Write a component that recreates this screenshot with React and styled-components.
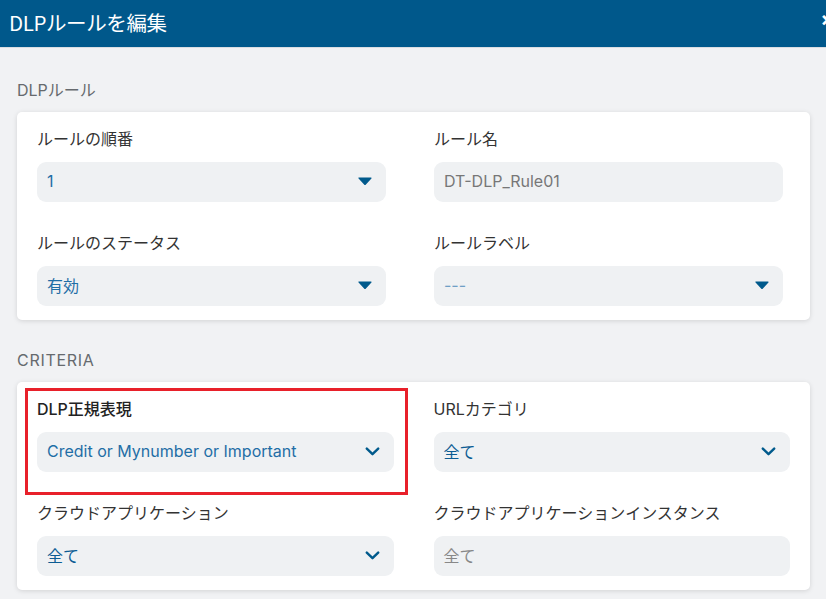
import React from "react";
import styled, { createGlobalStyle } from "styled-components";

const GlobalStyle = createGlobalStyle`
  html, body {
    margin: 0;
    padding: 0;
    background: #f1f2f4;
    overflow: hidden;
    font-family: "Inter", "Noto Sans CJK JP", sans-serif;
  }
`;

const Page = styled.div`
  width: 826px;
  height: 599px;
  background: #f1f2f4;
`;

const Header = styled.div`
  height: 48px;
  background: #00588b;
  border-bottom: 1px solid #d9dde2;
  display: flex;
  align-items: center;
  justify-content: space-between;
  padding-left: 9px;
  padding-bottom: 4px;
  box-sizing: border-box;
  overflow: hidden;
`;

const Title = styled.h1`
  margin: 0;
  font-family: "Noto Sans CJK JP", sans-serif;
  font-weight: 400;
  font-size: 20.5px;
  color: #fff;
  letter-spacing: -0.4px;
`;

const Close = styled.span`
  color: #fff;
  font-size: 20px;
  font-weight: 700;
  margin-right: -8px;
  margin-top: -6px;
`;

const Body = styled.div`
  padding: 31px 16px 0 17px;
`;

const SectionLabel = styled.div`
  font-size: 16px;
  line-height: 22px;
  color: #666a6e;
  letter-spacing: ${(p) => (p.caps ? "0.7px" : "0")};
  margin-bottom: 11px;
  margin-top: ${(p) => p.top || 0}px;
`;

const Card = styled.div`
  position: relative;
  background: #fff;
  border-radius: 5px;
  box-shadow: 0 1px 5px rgba(0, 0, 0, 0.13);
  padding: 16px ${(p) => p.right}px 14px 20px;
  display: grid;
  grid-template-columns: 1fr 1fr;
  column-gap: ${(p) => p.gap}px;
  row-gap: 30px;
`;

const Field = styled.div`
  display: flex;
  flex-direction: column;
`;

const Label = styled.div`
  font-size: 16px;
  line-height: 22px;
  color: ${(p) => (p.strong ? "#222" : "#333")};
  font-weight: ${(p) => (p.strong ? 500 : 400)};
  margin-bottom: 12px;
  white-space: nowrap;
`;

const Select = styled.div`
  height: 40px;
  border-radius: 9px;
  background: #eff1f3;
  display: flex;
  align-items: center;
  justify-content: space-between;
  padding: 0 14px 2px 10px;
  box-sizing: border-box;
  font-size: 16px;
  color: ${(p) => p.color || "#1f6ea6"};
`;

const Highlight = styled.div`
  position: absolute;
  left: 8px;
  top: 6px;
  width: 383px;
  height: 107px;
  border: 3px solid #e8202a;
  box-sizing: border-box;
  pointer-events: none;
`;

const Caret = () => (
  <svg width="14" height="8" viewBox="0 0 14 8">
    <path d="M1 1 H13 L7 7.5 Z" fill="#005a8c" stroke="#005a8c" strokeWidth="1.2" strokeLinejoin="round" />
  </svg>
);

const Chevron = () => (
  <svg width="15" height="9" viewBox="0 0 15 9">
    <path d="M1.8 1.6 L7.5 7.2 L13.2 1.6" fill="none" stroke="#005a8c" strokeWidth="2.4" strokeLinecap="round" strokeLinejoin="round" />
  </svg>
);

export default function App() {
  return (
    <Page>
      <GlobalStyle />
      <Header>
        <Title>DLPルールを編集</Title>
        <Close>×</Close>
      </Header>
      <Body>
        <SectionLabel>DLPルール</SectionLabel>
        <Card right={27} gap={48}>
          <Field>
            <Label>ルールの順番</Label>
            <Select>
              1
              <Caret />
            </Select>
          </Field>
          <Field>
            <Label>ルール名</Label>
            <Select color="#777">DT-DLP_Rule01</Select>
          </Field>
          <Field>
            <Label>ルールのステータス</Label>
            <Select>
              有効
              <Caret />
            </Select>
          </Field>
          <Field>
            <Label>ルールラベル</Label>
            <Select color="#6f9fc6">
              ---
              <Caret />
            </Select>
          </Field>
        </Card>
        <SectionLabel caps top={29}>CRITERIA</SectionLabel>
        <Card right={20} gap={40}>
          <Highlight />
          <Field>
            <Label strong>DLP正規表現</Label>
            <Select>
              Credit or Mynumber or Important
              <Chevron />
            </Select>
          </Field>
          <Field>
            <Label>URLカテゴリ</Label>
            <Select color="#0d5d94">
              全て
              <Chevron />
            </Select>
          </Field>
          <Field>
            <Label>クラウドアプリケーション</Label>
            <Select color="#0d5d94">
              全て
              <Chevron />
            </Select>
          </Field>
          <Field>
            <Label>クラウドアプリケーションインスタンス</Label>
            <Select color="#888">全て</Select>
          </Field>
        </Card>
      </Body>
    </Page>
  );
}
